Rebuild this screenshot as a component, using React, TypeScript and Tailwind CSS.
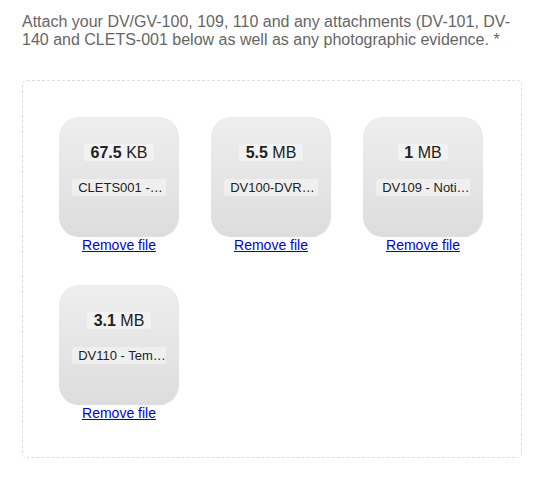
import React from "react";

type FileItem = { size: string; unit: string; name: string };

const files: FileItem[] = [
  { size: "67.5", unit: "KB", name: "CLETS001 - Confidential CLETS Information.pdf" },
  { size: "5.5", unit: "MB", name: "DV100-DVRO Request.pdf" },
  { size: "1", unit: "MB", name: "DV109 - Notice of Court Hearing.pdf" },
  { size: "3.1", unit: "MB", name: "DV110 - Temporary Restraining Order.pdf" },
];

function Preview({ f }: { f: FileItem }) {
  return (
    <div className="m-4 w-[120px]">
      <div className="h-[120px] w-[120px] rounded-[20px] bg-linear-to-b from-[#eeeeee] to-[#dddddd] px-[13px] pt-[26px] text-center text-[13px] leading-[19.5px] text-[#222]">
        <div className="mb-4 text-[16px] leading-[19.5px]">
          <span className="rounded-[3px] bg-white/40 px-[0.4em]">
            <strong>{f.size}</strong> {f.unit}
          </span>
        </div>
        <div className="overflow-hidden text-ellipsis whitespace-nowrap">
          <span className="rounded-[3px] border border-transparent bg-white/40 px-[0.4em]">
            {f.name}
          </span>
        </div>
      </div>
      <a
        href="#"
        className="block text-center text-[14px] leading-4 text-[#0000ee] underline"
      >
        Remove file
      </a>
    </div>
  );
}

export default function App() {
  return (
    <div
      className="min-h-[480px] bg-white"
      style={{ fontFamily: '"Liberation Sans", Arial, sans-serif' }}
    >
      <div className="ml-[22px] w-[500px] pt-[13px]">
        <p className="text-[16px] leading-[1.15] text-[#666]">
          Attach your DV/GV-100, 109, 110 and any attachments (DV-101, DV-140 and CLETS-001 below as well as any photographic evidence. *
        </p>
        <div className="mt-[30px] rounded-[5px] border border-dashed border-[#dddddd] p-5">
          <div className="flex flex-wrap">
            {files.map((f) => (
              <Preview key={f.name} f={f} />
            ))}
          </div>
        </div>
      </div>
    </div>
  );
}
